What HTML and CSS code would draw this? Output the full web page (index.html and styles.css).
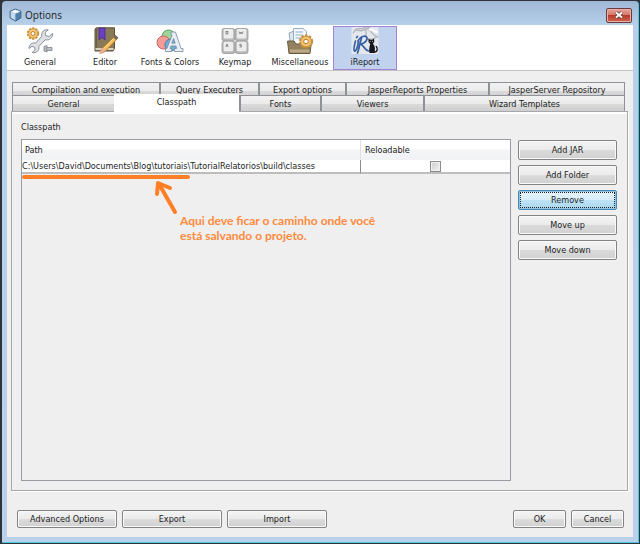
FILE: index.html
```html
<!DOCTYPE html>
<html lang="en">
<head>
<meta charset="utf-8">
<title>Options</title>
<link rel="stylesheet" href="styles.css">
</head>
<body>
<div class="window">
  <header class="titlebar">
    <svg class="app-icon" viewBox="0 0 14 14" aria-hidden="true">
      <path d="M7 .7 12.7 3v7.2L7 13.4 1.3 10.200V3z" fill="#86aed4" stroke="#24476d"/>
      <path d="M7 1.200 12.200 3.200 7 5.600 1.800 3.200z" fill="#f2f8fd"/>
      <path d="M1.800 3.400 7 5.700v7.100L1.800 9.900z" fill="#c3daef"/>
      <path d="M7 5.700 12.200 3.400v6.500L7 12.800z" fill="#527fae"/>
    </svg>
    <h1>Options</h1>
    <button class="close" aria-label="Close">
      <svg viewBox="0 0 10 8" aria-hidden="true"><path d="M2 1.500 8 6.500M8 1.500 2 6.500" stroke="#5c3434" stroke-width="3.400"/><path d="M2 1.500 8 6.500M8 1.500 2 6.500" stroke="#fff" stroke-width="2"/></svg>
    </button>
  </header>

  <div class="content">
    <nav class="categories">
      <button class="category">
        <svg viewBox="0 0 28 28" aria-hidden="true">
          <circle cx="7" cy="6.500" r="5.200" fill="#f5c56a" stroke="#c9923f" stroke-width="2" stroke-dasharray="2.200 1.100"/>
          <circle cx="7" cy="6.500" r="4.400" fill="#f7cd7d" stroke="#c78b36" stroke-width=".6"/>
          <circle cx="7" cy="6.500" r="2" fill="#fff" stroke="#b97f2c"/>
          <path d="M26.500 6.500 23 9.500 19.500 8.500 19.200 5.500 22.300 2.800C18 2 14.800 5.200 15.800 9.200L9.600 16.200C6.500 15 3 17.500 3 21.500L6 19.300 8.800 20.500 9 23.200 6 25.600C10.500 26.500 13.600 23.500 12.800 19.500L19.200 12.800C23.500 13.800 27.200 10.500 26.500 6.500z" fill="#dde1e5" stroke="#8b9297" stroke-linejoin="round"/>
          <path d="M18 19.500 21 18.500V25L18 24z" fill="#b6bfc6" stroke="#7c8389" stroke-width=".8"/>
          <path d="M21 20.500H26V23.500H21z" fill="#d9dee2" stroke="#7c8389" stroke-width=".8"/>
          <path d="M23 20.500V23.500M25 20.500V23.500" stroke="#7c8389" stroke-width=".6"/>
        </svg>
        <span>General</span>
      </button>
      <button class="category">
        <svg viewBox="0 0 28 28" aria-hidden="true">
          <path d="M4 2 5.500.8H23.500V21.500L22 24H4z" fill="#887a59" stroke="#5c5039"/>
          <path d="M4.500 22H22.500" stroke="#eee7d4" stroke-width="1.600"/>
          <path d="M5.500 2V21" stroke="#6b5e43"/>
          <path d="M8 1H14V13L11 10.500 8 13z" fill="#6a3fc0" stroke="#44238c" stroke-width=".7"/>
          <path d="M24.500 8.500 27 11 14 24.500 9.500 26.500 11 21.500z" fill="#f6bd58" stroke="#a87424" stroke-width=".8"/>
          <path d="M22.500 10.500 25 13 27.300 10.700 24.700 8z" fill="#756b66"/>
          <path d="M12 20.500 15 23.500 9 27C8.200 27 8 26 8.500 25z" fill="#f2ae98"/>
          <path d="M22 12 13 21.500" stroke="#ffe29a"/>
        </svg>
        <span>Editor</span>
      </button>
      <button class="category">
        <svg viewBox="0 0 28 28" aria-hidden="true">
          <circle cx="12.500" cy="9.500" r="6.500" fill="#9ed69a" stroke="#5ea063"/>
          <circle cx="7.500" cy="15.500" r="6.500" fill="#f39c98" stroke="#cc6467"/>
          <circle cx="15" cy="18" r="6" fill="#76add5" stroke="#4b7fa8"/>
          <path d="M15 5H19.500L25 21.500H27V24.500H18.500V21.500H20.500L20 19H15L14 21.500H15.500V24.500H9.500V21.500H11L16 8H15zM17.500 11.500 15.800 16.200H19.200z" fill="#e7edf2" stroke="#728ba1" stroke-width=".8"/>
        </svg>
        <span>Fonts &amp; Colors</span>
      </button>
      <button class="category">
        <svg viewBox="0 0 28 28" aria-hidden="true">
          <g stroke="#999" stroke-width=".8"><rect x="1" y="1.500" width="12.800" height="12.300" rx="2" fill="#b8b8b8"/><rect x="14.200" y="1.500" width="12.800" height="12.300" rx="2" fill="#b8b8b8"/><rect x="1" y="14.200" width="12.800" height="12.300" rx="2" fill="#b8b8b8"/><rect x="14.200" y="14.200" width="12.800" height="12.300" rx="2" fill="#b8b8b8"/></g>
          <g fill="#ededed"><rect x="2.600" y="2" width="9.600" height="9.500" rx="1.500"/><rect x="15.800" y="2" width="9.600" height="9.500" rx="1.500"/><rect x="2.600" y="14.700" width="9.600" height="9.500" rx="1.500"/><rect x="15.800" y="14.700" width="9.600" height="9.500" rx="1.500"/></g>
          <g fill="none" stroke="#777" stroke-width=".8"><rect x="5" y="4.500" width="1.800" height="2.400"/><path d="M18 4.500 19 7 20 5 21 7 22 4.500M4.800 20 6 17 7.200 20M5.200 19H6.800M20.500 17.200H18.800V18.500H20.500V20H18.600"/></g>
        </svg>
        <span>Keymap</span>
      </button>
      <button class="category">
        <svg viewBox="0 0 28 28" aria-hidden="true">
          <path d="M3 6 11 3 16 17 5 20z" fill="#dfe8ee" stroke="#8296a4" stroke-width=".8"/>
          <path d="M7.500 1.500H17L20.500 4.500V20H7.500z" fill="#f2f8fb" stroke="#7e9bb0" stroke-width=".8"/>
          <path d="M9.500 5H17M9.500 8H17M9.500 11H17" stroke="#8fb0c8" stroke-width="1.200"/>
          <path d="M1.500 14H8L10 17H19L21 14H25.500L24 26.500H3z" fill="#93805e" stroke="#695a40"/>
          <path d="M3.500 22.500H23.500V25.500H4z" fill="#baa987"/>
          <circle cx="20" cy="14.500" r="6" fill="#efb65c" stroke="#c58a3a" stroke-width="2.200" stroke-dasharray="2.500 1.300"/>
          <circle cx="20" cy="14.500" r="5.300" fill="#f4c36f" stroke="#c58632" stroke-width=".6"/>
          <circle cx="20" cy="14.500" r="2.300" fill="#fff" stroke="#b87b2b"/>
        </svg>
        <span>Miscellaneous</span>
      </button>
      <button class="category selected" aria-pressed="true">
        <svg viewBox="0 0 28 28" aria-hidden="true">
          <rect x=".5" width="27" height="27" fill="#e4e7ec"/>
          <path d="M2 6C7-1 17 1 15 7S21 14 27 9M12 0C22 2 20 9 27 10M4 2C10 6 15 2 19 0" fill="none" stroke="#b3b8c0" stroke-width="1.400"/>
          <path d="M18 3C22 1 24 6 27 5" fill="none" stroke="#fff" stroke-width="2"/>
          <path d="M4.500 14C3.500 18 2 23 3.500 24S7 19 7.500 14M5.500 10.500 6.500 9.500M10.500 11C9 16 8 22 6.500 26M7 14C10 8 17 8 16 12S10.500 17 9.500 17C13 18 13.500 24 18 24" fill="none" stroke="#345fa4" stroke-width="1.700" stroke-linecap="round"/>
          <path d="M17.500 11.500 19.200 12.800H21.200L23 11.500 23.300 15 21.800 16.800C24 18.500 24.500 22 23.500 26H18.500C18 22 18.300 19.500 19.300 17L17.500 15z" fill="#15171c"/>
          <path d="M23.500 25C27 25 26.500 21 25.300 19.500" fill="none" stroke="#15171c" stroke-width="1.300" stroke-linecap="round"/>
          <path d="M18.800 14.500H19.600M21.200 14.500H22" stroke="#fff" stroke-width=".8"/>
        </svg>
        <span>iReport</span>
      </button>
    </nav>

    <main class="page">
      <div class="tabs" role="tablist">
        <div class="tab-row back">
          <button role="tab">Compilation and execution</button>
          <button role="tab">Query Executers</button>
          <button role="tab">Export options</button>
          <button role="tab">JasperReports Properties</button>
          <button role="tab">JasperServer Repository</button>
        </div>
        <div class="tab-row front">
          <button role="tab">General</button>
          <button role="tab" class="active" aria-selected="true">Classpath</button>
          <button role="tab">Fonts</button>
          <button role="tab">Viewers</button>
          <button role="tab">Wizard Templates</button>
        </div>
      </div>

      <section class="panel" role="tabpanel">
        <h2>Classpath</h2>
        <div class="panel-body">
          <div class="list">
            <table>
              <colgroup><col class="col-path"><col class="col-reload"></colgroup>
              <thead><tr><th class="path">Path</th><th>Reloadable</th></tr></thead>
              <tbody>
                <tr>
                  <td class="path">C:\Users\David\Documents\Blog\tutoriais\TutorialRelatorios\build\classes</td>
                  <td class="check"><input type="checkbox" aria-label="Reloadable"></td>
                </tr>
              </tbody>
            </table>
            <div class="note">
              <svg viewBox="0 0 170 42" aria-hidden="true">
                <g fill="none" stroke="#ff7f27" stroke-width="4" stroke-linecap="round" stroke-linejoin="round">
                  <path d="M2 3H166"/>
                  <path d="M153 38 137 10M135 20 136 9 148 14"/>
                </g>
              </svg>
              <p>Aqui deve ficar o caminho onde você<br>está salvando o projeto.</p>
            </div>
          </div>
          <div class="actions">
            <button class="btn">Add JAR</button>
            <button class="btn">Add Folder</button>
            <button class="btn focused">Remove</button>
            <button class="btn">Move up</button>
            <button class="btn">Move down</button>
          </div>
        </div>
      </section>
    </main>

    <footer class="footer">
      <button class="btn wide">Advanced Options</button>
      <button class="btn wide">Export</button>
      <button class="btn wide">Import</button>
      <span class="spacer"></span>
      <button class="btn small">OK</button>
      <button class="btn small">Cancel</button>
    </footer>
  </div>
</div>
</body>
</html>
```
FILE: styles.css
```css
* { box-sizing: border-box; }

html, body { height: 100%; margin: 0; }

body, button {
  font-family: "DejaVu Sans Condensed", "DejaVu Sans", sans-serif;
  font-size: 9px;
  line-height: 12px;
  color: #1c1c1c;
}

body { background: #30343a; padding: 1px 1px 1px 2px; }

h1, h2, p { margin: 0; font-weight: normal; }

button { margin: 0; padding: 0; white-space: nowrap; }

.window {
  display: flex;
  flex-direction: column;
  height: 100%;
  padding: 0 5px 5px;
  background: linear-gradient(#9db7d5, #b7d0ea 24px, #b9d1ea);
  border: solid #4cc9e0;
  border-width: 0 1px 1px 0;
  border-radius: 4px 4px 0 0;
}

.titlebar {
  display: flex;
  align-items: center;
  gap: 3px;
  height: 24px;
  padding: 4px 1px 0 2px;
}

.titlebar h1 {
  flex: 1;
  font-family: "Open Sans", sans-serif;
  font-size: 10px;
}

.app-icon { width: 13px; height: 14px; }

.close {
  display: grid;
  place-items: center;
  width: 26px;
  height: 15px;
  border: 1px solid #6c3a3c;
  border-radius: 2px;
  background: linear-gradient(#e5a59a, #d5796d 45%, #b8392a 50%, #cf6853);
  box-shadow: inset 0 0 0 1px #e8b1a7;
}

.close svg { width: 10px; height: 8px; }

.content {
  display: flex;
  flex-direction: column;
  flex: 1;
  min-height: 0;
  background: #efefef;
}

.categories {
  display: flex;
  gap: 1px;
  height: 46px;
  padding-left: 1px;
  background: #fff;
  border-bottom: 1px solid #c3c3c3;
}

.category {
  display: flex;
  flex-direction: column;
  align-items: center;
  gap: 1px;
  width: 64px;
  height: 44px;
  margin-top: 1px;
  border: 1px solid transparent;
  background: none;
}

.category svg { width: 28px; height: 28px; }

.category.selected { background: #c1d2ee; border-color: #a384d4; }

.page {
  display: flex;
  flex-direction: column;
  flex: 1;
  min-height: 0;
  padding: 11px 5px 0 4px;
}

.tabs { padding: 0 3px 0 1px; }

.tab-row { display: grid; }

.tab-row.back { grid-template-columns: 147fr 99fr 87fr 143fr 137fr; height: 13px; overflow: hidden; }

.tab-row.front { grid-template-columns: 102fr 125fr 81fr 103fr 202fr; height: 16px; }

.tab-row button {
  height: 16px;
  border: solid #8e9197;
  border-width: 1px 0 0 2px;
  background: linear-gradient(#f2f2f2, #ebebeb 50%, #dadada 55%, #cfcfcf);
}

.tab-row.back button { padding-bottom: 1px; }

.tab-row button:first-child { border-left-width: 1px; }

.tab-row button:last-child { border-right-width: 1px; }

.tab-row .active {
  position: relative;
  height: 18px;
  margin-top: -1px;
  padding-bottom: 2px;
  border-width: 0;
  background: #fff;
}

.panel {
  display: flex;
  flex-direction: column;
  flex: 1;
  padding: 9px 10px 9px 9px;
  border: 1px solid #a6a8ae;
  box-shadow: inset 0 2px #fff, 1px 1px #fff;
}

.panel h2 {
  margin-bottom: 5px;
  font-size: 9px;
  line-height: 13px;
}

.panel-body { display: flex; gap: 7px; flex: 1; }

.list {
  position: relative;
  flex: 1;
  border: 1px solid #9a9ca3;
}

table { width: 100%; border-collapse: separate; border-spacing: 0; table-layout: fixed; }

.col-reload { width: 149px; }

th, td { padding: 0; font-weight: normal; text-align: left; white-space: nowrap; }

th {
  height: 20px;
  padding-left: 4px;
  background: linear-gradient(#fff, #fff 45%, #f4f5f6 50%, #f1f2f3);
}

th.path { padding-left: 3px; border-right: 1px solid #dfe0e2; }

td {
  height: 14px;
  background: #fff;
  border-bottom: 2px solid #bdbdbd;
  line-height: 11px;
}

td.path { border-right: 1px solid #8c8c8c; }

input[type="checkbox"] {
  display: block;
  width: 11px;
  height: 11px;
  margin: 0 auto;
  appearance: none;
  border: 1px solid #8d8d8d;
  background: linear-gradient(135deg, #cdcdcd, #f3f3f3);
  box-shadow: inset 0 0 0 1px #f0f0f0;
}

.note { position: absolute; top: 34px; left: 0; }

.note svg { display: block; width: 170px; height: 42px; }

.note p {
  margin: -3px 0 0 158px;
  font: bold 12px/15px Lato, sans-serif;
  color: #ff8a3c;
}

.actions { display: flex; flex-direction: column; gap: 5px; width: 99px; padding-top: 1px; }

.btn {
  height: 18px;
  border: 1px solid #838383;
  border-radius: 2px;
  background: linear-gradient(#f3f3f3, #ebebeb 48%, #dbdbdb 52%, #d0d0d0);
  box-shadow: inset 0 0 0 1px #fafafa;
}

.actions .btn { height: 20px; }

.btn.focused {
  border-color: #4b87b4;
  background: linear-gradient(#e5f4fc, #d8eefa 48%, #bee3f6 52%, #a9d5ec);
  box-shadow: inset 0 0 0 1px #8fc4e2;
  outline: 1px dotted #222;
  outline-offset: -3px;
}

.footer {
  display: flex;
  gap: 5px;
  padding: 19px 9px 9px 10px;
}

.wide { width: 100px; }

.small { width: 53px; }

.spacer { flex: 1; }
```
